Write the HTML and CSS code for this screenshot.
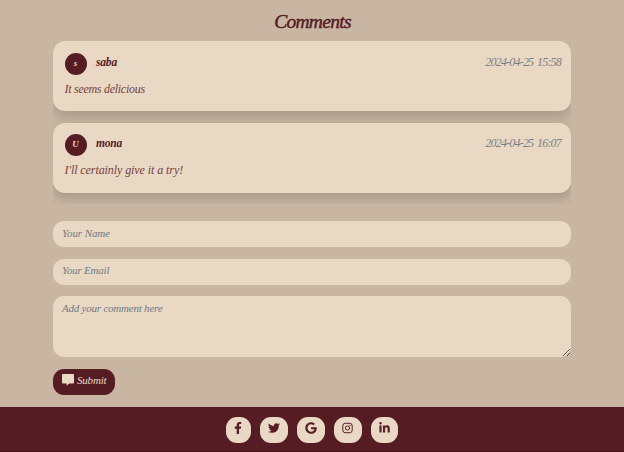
FILE: index.html
```html
<!DOCTYPE html>
<html lang="en">
<head>
<meta charset="utf-8">
<title>Comments</title>
<link rel="stylesheet" href="styles.css">
</head>
<body>
<main class="page">
  <h2 class="title">Comments</h2>
  <section class="comments">
    <article class="card">
      <header class="card-head"><span class="avatar">s</span><span class="name">saba</span><time class="date">2024-04-25 15:58</time></header>
      <p class="text">It seems delicious</p>
    </article>
    <article class="card">
      <header class="card-head"><span class="avatar">U</span><span class="name">mona</span><time class="date">2024-04-25 16:07</time></header>
      <p class="text long">I'll certainly give it a try!</p>
    </article>
  </section>
  <form class="form">
    <input class="field" type="text" placeholder="Your Name">
    <input class="field" type="email" placeholder="Your Email">
    <textarea class="field area" placeholder="Add your comment here"></textarea>
    <button class="submit" type="button">
      <svg width="12" height="12" viewBox="0 0 12 12"><path fill="currentColor" d="M1 0h10a1 1 0 0 1 1 1v7.6a1 1 0 0 1-1 1H7.2L4.6 11.8V9.6H1a1 1 0 0 1-1-1V1a1 1 0 0 1 1-1z"/></svg>
      <span>Submit</span>
    </button>
  </form>
</main>
<footer class="footer">
  <a class="social facebook"><svg width="8" height="12" viewBox="0 0 320 512"><path fill="currentColor" d="M279.14 288l14.22-92.66h-88.91v-60.13c0-25.35 12.42-50.06 52.24-50.06h40.42V6.26S260.43 0 225.36 0c-73.22 0-121.08 44.38-121.08 124.72v70.62H22.89V288h81.39v224h100.17V288z"/></svg></a>
  <a class="social twitter"><svg width="12" height="12" viewBox="0 0 512 512"><path fill="currentColor" d="M459.37 151.716c.325 4.548.325 9.097.325 13.645 0 138.72-105.583 298.558-298.558 298.558-59.452 0-114.68-17.219-161.137-47.106 8.447.974 16.568 1.299 25.34 1.299 49.055 0 94.213-16.568 130.274-44.832-46.132-.975-84.792-31.188-98.112-72.772 6.498.974 12.995 1.624 19.818 1.624 9.421 0 18.843-1.3 27.614-3.573-48.081-9.747-84.143-51.98-84.143-102.985v-1.299c13.969 7.797 30.214 12.67 47.431 13.319-28.264-18.843-46.781-51.005-46.781-87.391 0-19.492 5.197-37.36 14.294-52.954 51.655 63.675 129.3 105.258 216.365 109.807-1.624-7.797-2.599-15.918-2.599-24.04 0-57.828 46.782-104.934 104.934-104.934 30.213 0 57.502 12.67 76.67 33.137 23.715-4.548 46.456-13.32 66.599-25.34-7.798 24.366-24.366 44.833-46.132 57.827 21.117-2.273 41.584-8.122 60.426-16.243-14.292 20.791-32.161 39.308-52.628 54.253z"/></svg></a>
  <a class="social google"><svg width="12" height="12" viewBox="0 0 488 512"><path fill="currentColor" d="M488 261.8C488 403.3 391.1 504 248 504 110.8 504 0 393.2 0 256S110.8 8 248 8c66.8 0 123 24.5 166.3 64.9l-67.5 64.9C258.5 52.6 94.3 116.6 94.3 256c0 86.5 69.1 156.6 153.7 156.6 98.2 0 135-70.4 140.8-106.9H248v-85.3h236.1c2.3 12.7 3.9 24.9 3.9 41.4z"/></svg></a>
  <a class="social instagram"><svg width="11" height="12" viewBox="0 0 11 12"><rect x=".8" y="1.3" width="9.4" height="9.4" rx="2.5" fill="none" stroke="currentColor"/><circle cx="5.5" cy="6" r="2.1" fill="none" stroke="currentColor"/><circle cx="8.1" cy="3.4" r=".6" fill="currentColor"/></svg></a>
  <a class="social linkedin"><svg width="11" height="12" viewBox="0 0 448 512"><path fill="currentColor" d="M100.28 448H7.4V148.9h92.88zM53.79 108.1C24.09 108.1 0 83.5 0 53.8a53.79 53.79 0 0 1 107.58 0c0 29.7-24.1 54.3-53.79 54.3zM447.9 448h-92.68V302.4c0-34.7-.7-79.2-48.29-79.2-48.29 0-55.69 37.7-55.69 76.7V448h-92.78V148.9h89.08v40.8h1.3c12.4-23.5 42.69-48.3 87.88-48.3 94 0 111.28 61.9 111.28 142.3V448z"/></svg></a>
</footer>
</body>
</html>
```
FILE: styles.css
```css
* { box-sizing: border-box; }
body {
  margin: 0;
  height: 452px;
  overflow: hidden;
  display: flex;
  flex-direction: column;
  background: #c8b6a2;
  color: #561c24;
  font-family: "Liberation Serif", serif;
  font-style: italic;
}
.page { height: 407px; padding: 0 53px; }
.title {
  margin: 0;
  height: 41px;
  padding: 10px 0 0 1px;
  text-align: center;
  font-size: 19.5px;
  line-height: 24px;
  font-weight: 400;
  letter-spacing: -.7px;
  -webkit-text-stroke: .45px #561c24;
}
.comments {
  display: flex;
  flex-direction: column;
  gap: 12px;
  height: 163px;
  width: 518px;
  overflow: hidden;
}
.card {
  flex: none;
  height: 69.8px;
  padding: 11.5px 10px 0 11.5px;
  border-radius: 12px;
  background: #e8d8c4;
  box-shadow: 0 6px 12px rgba(0, 0, 0, .16);
}
.card-head { display: flex; height: 22px; }
.avatar {
  width: 22px;
  height: 22px;
  border-radius: 50%;
  background: #561c24;
  color: #e8d8c4;
  font-size: 9px;
  font-weight: 700;
  line-height: 21px;
  text-align: center;
}
.name {
  margin-left: 9.5px;
  font-size: 11.5px;
  font-weight: 700;
  line-height: 19px;
  letter-spacing: -.2px;
}
.date {
  margin-left: auto;
  font-size: 12px;
  line-height: 19px;
  letter-spacing: -.8px;
  word-spacing: 1.5px;
  color: #7c8084;
}
.text {
  margin: 6px 0 0;
  font-size: 12px;
  line-height: 17px;
  letter-spacing: -.28px;
  color: #763f43;
}
.long { letter-spacing: -.08px; }
.form {
  display: flex;
  flex-direction: column;
  align-items: flex-start;
  gap: 11.6px;
  width: 518px;
  padding-top: 17.3px;
}
.field {
  width: 100%;
  height: 26px;
  padding: 0 9px 3px;
  border: 0;
  border-radius: 11px;
  background: #e8d8c4;
  color: #561c24;
  font: italic 11px "Liberation Serif", serif;
  letter-spacing: -.22px;
}
.field:first-child { letter-spacing: -.1px; }
.field::placeholder { color: #747b81; opacity: 1; }
.area { height: 60.5px; padding-top: 6px; resize: vertical; }
.submit {
  display: flex;
  align-items: center;
  gap: 3px;
  width: 62px;
  height: 26.5px;
  padding: 0 0 3px 9px;
  border: 0;
  border-radius: 11px;
  background: #561c24;
  color: #e8d8c4;
  font: italic 11px "Liberation Serif", serif;
  letter-spacing: -.2px;
}
.submit svg { flex: none; }
.footer {
  display: flex;
  justify-content: center;
  gap: 9px;
  height: 45px;
  padding-top: 9.5px;
  background: #561c24;
  border-bottom: 1px solid #481419;
}
.social {
  display: flex;
  align-items: center;
  justify-content: center;
  width: 27.8px;
  height: 26.5px;
  padding-bottom: 3px;
  border-radius: 11px;
  background: #e8d8c4;
}
.facebook { width: 25px; }
.twitter { width: 28.6px; }
.linkedin { width: 27.4px; }
```
